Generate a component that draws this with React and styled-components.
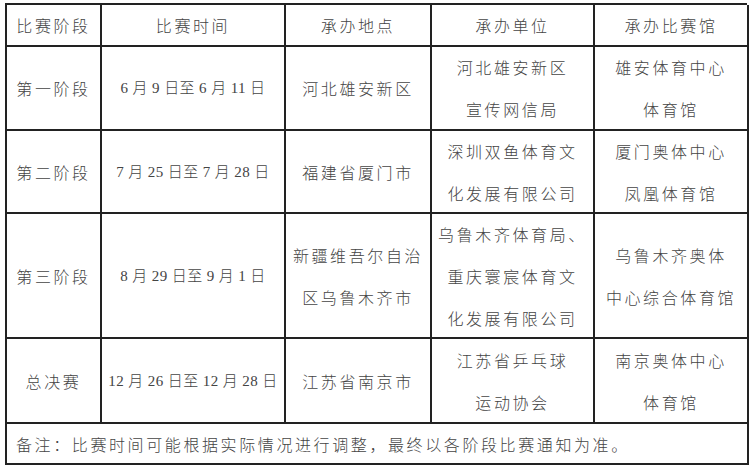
import React from 'react';
import styled, { createGlobalStyle } from 'styled-components';

const Global = createGlobalStyle`
  html, body {
    margin: 0;
    padding: 0;
    background: #fff;
  }
  body {
    font-family: "Noto Sans CJK SC", "Liberation Serif", serif;
    color: #444;
  }
`

const Page = styled.div`
  padding: 3px 0 0 5px;
`

const Grid = styled.div`
  display: grid;
  grid-template-columns: 95px 184px 146px 163px 154px;
  grid-template-rows: 42px 84px 83px 125px 85px 41px;
  width: 742px;
  box-sizing: border-box;
  border-top: 2px solid #222;
  border-left: 2px solid #222;
`

const Cell = styled.div`
  box-sizing: border-box;
  border-right: 2px solid #222;
  border-bottom: 2px solid #222;
  display: flex;
  flex-direction: column;
  align-items: ${p => (p.$left ? 'flex-start' : 'center')};
  justify-content: center;
  grid-column: ${p => (p.$span ? `span ${p.$span}` : 'auto')};
  padding-left: ${p => (p.$left ? '9px' : '0')};
  font-size: 16px;
  font-weight: 300;
  letter-spacing: 2.6px;
  line-height: 42px;
  text-align: center;
  white-space: nowrap;
`

const DateText = styled.span`
  font-family: "Liberation Serif", "Noto Sans CJK SC", serif;
  font-size: 15px;
  letter-spacing: 0.4px;
  white-space: pre;
`

const rows = [
  ['第一阶段', '6 月 9 日至 6 月 11 日', ['河北雄安新区'], ['河北雄安新区', '宣传网信局'], ['雄安体育中心', '体育馆']],
  ['第二阶段', '7 月 25 日至 7 月 28 日', ['福建省厦门市'], ['深圳双鱼体育文', '化发展有限公司'], ['厦门奥体中心', '凤凰体育馆']],
  ['第三阶段', '8 月 29 日至 9 月 1 日', ['新疆维吾尔自治', '区乌鲁木齐市'], ['乌鲁木齐体育局、', '重庆寰宸体育文', '化发展有限公司'], ['乌鲁木齐奥体', '中心综合体育馆']],
  ['总决赛', '12 月 26 日至 12 月 28 日', ['江苏省南京市'], ['江苏省乒乓球', '运动协会'], ['南京奥体中心', '体育馆']],
]

const headers = ['比赛阶段', '比赛时间', '承办地点', '承办单位', '承办比赛馆']

const Lines = ({ items }) => items.map((t, i) => <span key={i}>{t}</span>)

export default function App() {
  return (
    <Page>
      <Global />
      <Grid>
        {headers.map(h => <Cell key={h}>{h}</Cell>)}
        {rows.map(r => (
          <React.Fragment key={r[0]}>
            <Cell>{r[0]}</Cell>
            <Cell><DateText>{r[1]}</DateText></Cell>
            <Cell><Lines items={r[2]} /></Cell>
            <Cell><Lines items={r[3]} /></Cell>
            <Cell><Lines items={r[4]} /></Cell>
          </React.Fragment>
        ))}
        <Cell $span={5} $left>备注：比赛时间可能根据实际情况进行调整，最终以各阶段比赛通知为准。</Cell>
      </Grid>
    </Page>
  )
}
